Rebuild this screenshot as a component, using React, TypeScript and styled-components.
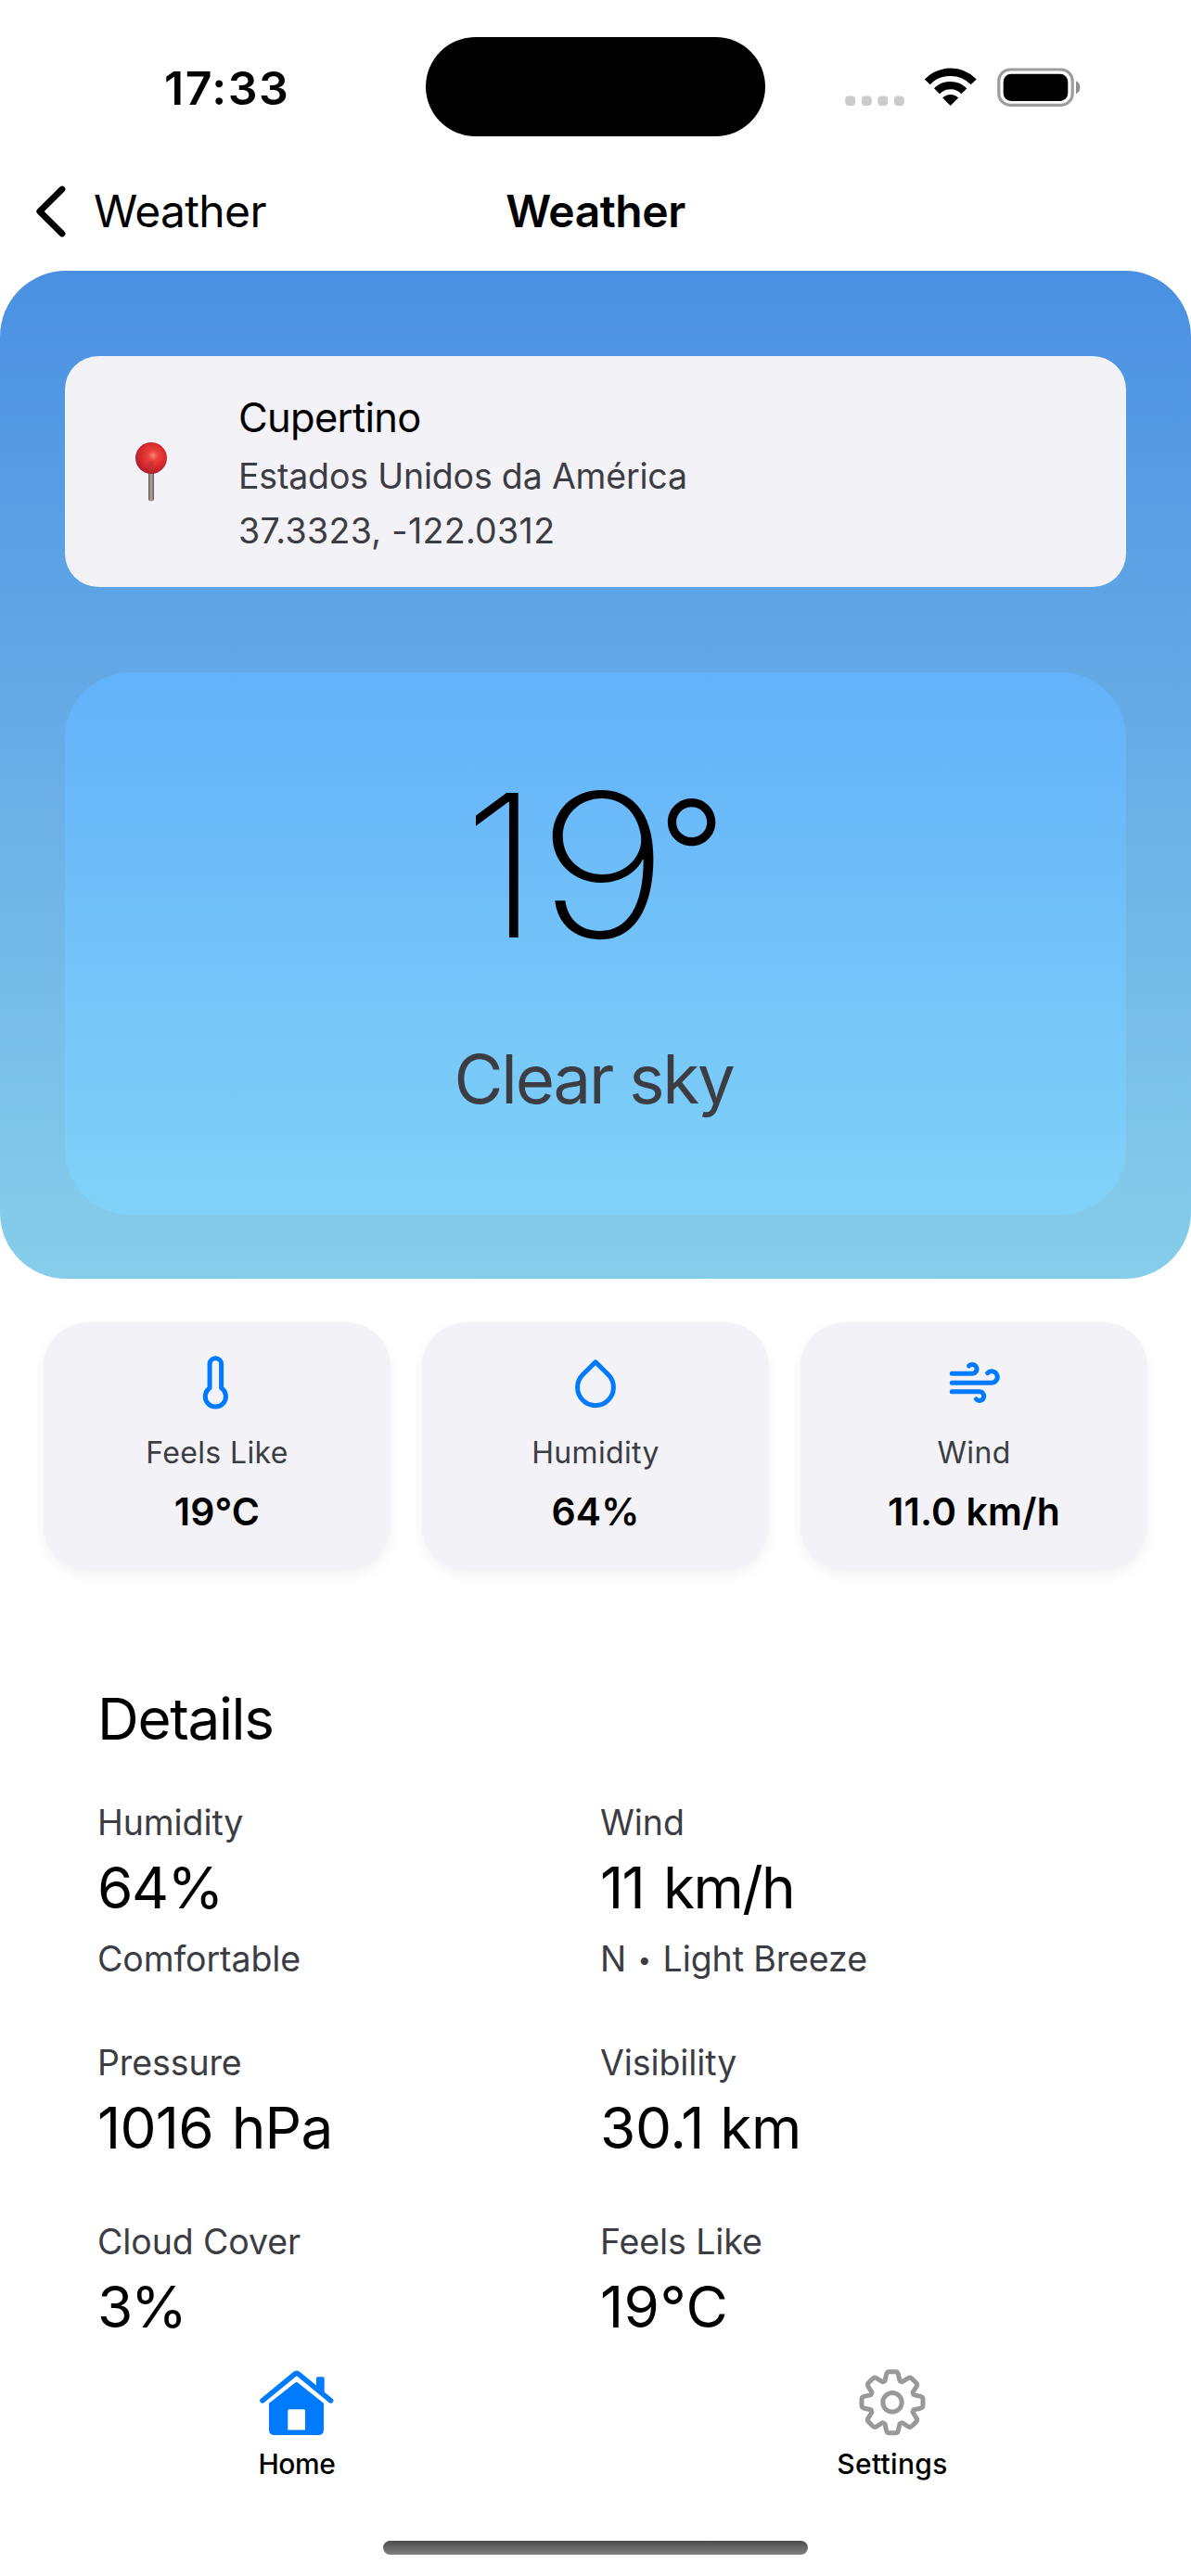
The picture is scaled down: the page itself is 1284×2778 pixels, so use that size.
import React from "react";
import styled, { createGlobalStyle } from "styled-components";

const ink = "#000000";
const secondary = "#3c3c43";
const surface = "#f2f2f7";
const accent = "#007aff";

const GlobalStyle = createGlobalStyle`
  *, *::before, *::after { box-sizing: border-box; }
  html, body { margin: 0; padding: 0; background: #ffffff; }
  body { font-family: Inter, "Liberation Sans", sans-serif; color: ${ink}; }
  svg { display: block; flex: none; }
`;

const Screen = styled.div`
  display: flex;
  flex-direction: column;
  width: 1284px;
  height: 2778px;
  overflow: hidden;
  background: #ffffff;
`;

/* ---------- status bar ---------- */

const StatusBar = styled.header`
  display: grid;
  grid-template-columns: 459px 366px 1fr;
  align-items: center;
  height: 187px;
`;

const Clock = styled.time`
  padding: 3px 0 0 177px;
  font-size: 50px;
  font-weight: 600;
  line-height: 60px;
  letter-spacing: 1.5px;
`;

const Island = styled.div`
  height: 107px;
  border-radius: 54px;
  background: #000000;
`;

const Indicators = styled.div`
  display: flex;
  gap: 22px;
  padding-left: 86px;
`;

/* ---------- navigation ---------- */

const NavBar = styled.nav`
  display: grid;
  grid-template-columns: 1fr auto 1fr;
  align-items: center;
  height: 104.6px;
  padding: 0 38px 23px;
`;

const BackButton = styled.a`
  display: flex;
  align-items: center;
  gap: 30px;
  font-size: 48px;
  line-height: 60px;
  letter-spacing: -0.65px;
`;

const NavTitle = styled.h1`
  margin: 0;
  font-size: 48px;
  font-weight: 600;
  line-height: 60px;
  letter-spacing: -0.45px;
`;

/* ---------- hero ---------- */

const Hero = styled.section`
  display: flex;
  flex-direction: column;
  gap: 91.8px;
  padding: 92.7px 70px 68.5px;
  border-radius: 71px;
  background: linear-gradient(180deg, #4a90e2 0%, #87ceeb 100%);
`;

const LocationCard = styled.div`
  display: grid;
  grid-template-columns: 187px 1fr;
  align-items: center;
  height: 249px;
  border-radius: 36px;
  background: ${surface};
`;

const PinSlot = styled.div`
  display: flex;
  justify-content: center;
  padding-right: 2px;
`;

const LocationText = styled.div`
  display: flex;
  flex-direction: column;
  padding-top: 5px;
`;

const City = styled.div`
  margin-bottom: 4px;
  font-size: 43.5px;
  line-height: 60px;
  letter-spacing: -0.73px;
`;

const LocationLine = styled.div<{ $tracking: number }>`
  font-size: 37.5px;
  line-height: 59.5px;
  letter-spacing: ${(p) => p.$tracking}px;
  color: ${secondary};
`;

const CurrentCard = styled.div`
  height: 585.2px;
  padding-top: 78.4px;
  border-radius: 71px;
  background: linear-gradient(180deg, #63b1f9 0%, #81d2f8 100%);
  text-align: center;
`;

const Temperature = styled.div`
  height: 260px;
  padding-right: 2px;
  font-size: 215px;
  font-weight: 200;
  line-height: 260px;
  white-space: nowrap;
`;

const WideDigit = styled.span`
  display: inline-block;
  transform: scaleX(1.13);
  transform-origin: 13px 50%;
`;

const Degree = styled.span`
  margin-left: 2px;
  font-size: 162px;
  font-weight: 260;
  line-height: 0;
  vertical-align: 31px;
`;

const Condition = styled.div`
  margin-top: 55.8px;
  padding-right: 4px;
  font-size: 72.5px;
  line-height: 90px;
  letter-spacing: -2.2px;
  color: ${secondary};
`;

/* ---------- quick stats ---------- */

const StatRow = styled.section`
  display: grid;
  grid-template-columns: repeat(3, 1fr);
  gap: 34px;
  margin-top: 47px;
  padding: 0 47px;
`;

const StatCard = styled.div`
  display: flex;
  flex-direction: column;
  align-items: center;
  height: 268.7px;
  padding-top: 29.5px;
  border-radius: 48px;
  background: ${surface};
  box-shadow: 0 5px 14px rgba(0, 0, 0, 0.05);
`;

const StatLabel = styled.div`
  margin-top: 15.9px;
  font-size: 32px;
  line-height: 48px;
  letter-spacing: 0.35px;
  color: ${secondary};
`;

const StatValue = styled.div`
  margin-top: 11.2px;
  font-size: 41px;
  font-weight: 600;
  line-height: 56px;
  letter-spacing: 0.1px;
`;

/* ---------- details ---------- */

const Details = styled.section`
  margin-top: 120px;
  padding: 0 95px 0 105px;
`;

const DetailsTitle = styled.h2`
  margin: 0 0 41.6px;
  font-size: 62px;
  font-weight: 400;
  line-height: 80px;
  letter-spacing: -1.35px;
`;

const MetricGrid = styled.div`
  display: grid;
  grid-template-columns: repeat(2, 542px);
  row-gap: 53.3px;
`;

const Metric = styled.div`
  display: flex;
  flex-direction: column;
`;

const MetricLabel = styled.div`
  font-size: 37.5px;
  line-height: 60px;
  letter-spacing: -0.1px;
  color: ${secondary};
`;

const MetricValue = styled.div<{ $tracking: number; $wordGap?: number }>`
  font-size: 62px;
  line-height: 80px;
  letter-spacing: ${(p) => p.$tracking}px;
  word-spacing: ${(p) => p.$wordGap ?? 0}px;
`;

const MetricNote = styled(MetricLabel)`
  padding-top: 8px;
  line-height: 57.4px;
`;

const Bullet = styled.span`
  margin: 0 2px;
  font-size: 26px;
  line-height: 0;
  vertical-align: 3px;
`;

/* ---------- tab bar ---------- */

const TabBar = styled.nav`
  display: grid;
  grid-template-columns: 640px 644px;
  padding-top: 26.6px;
`;

const Tab = styled.a`
  display: flex;
  flex-direction: column;
  align-items: center;
  gap: 10.8px;
`;

const TabLabel = styled.span<{ $tracking: number }>`
  font-size: 30px;
  font-weight: 500;
  line-height: 40px;
  letter-spacing: ${(p) => p.$tracking}px;
`;

const HomeIndicator = styled.div`
  width: 457.5px;
  height: 15px;
  margin: 62.4px 0 0 413.2px;
  border-radius: 8px;
  background: linear-gradient(180deg, #4b4b4b 0%, #808080 100%);
`;

/* ---------- icons ---------- */

const SignalDots = () => (
  <svg width="64" height="42" viewBox="0 0 64 42" fill="#cbcbcb">
    {[0, 17.6, 35.1, 52.7].map((x) => (
      <rect key={x} x={x + 0.3} y="30.5" width="10.8" height="10.4" rx="3.6" />
    ))}
  </svg>
);

const WifiIcon = () => (
  <svg width="56" height="42" viewBox="0 0 56 42" fill="none" stroke="#000">
    <path d="M2.7 15.4A34.7 34.7 0 0 1 52.7 15.4" strokeWidth="8.3" />
    <path d="M13 25.3A20.5 20.5 0 0 1 42.4 25.3" strokeWidth="8.4" />
    <path d="M27.7 41L19.2 32.6A12 12 0 0 1 36.2 32.6Z" fill="#000" stroke="none" />
  </svg>
);

const BatteryIcon = () => (
  <svg width="91" height="42" viewBox="0 0 91 42">
    <rect x="1.8" y="2" width="79.4" height="38.4" rx="12.5" fill="none" stroke="#9c9c9c" strokeWidth="3.2" />
    <rect x="6.7" y="6.7" width="69.6" height="29.2" rx="8.5" fill="#000" />
    <path d="M85 14.3A7.8 7.8 0 0 1 85 28.3Z" fill="#8e8e8e" />
  </svg>
);

const ChevronIcon = () => (
  <svg width="33" height="56" viewBox="0 0 33 56" fill="none" stroke="#000" strokeWidth="6.8" strokeLinecap="round" strokeLinejoin="round">
    <path d="M29 4L4.8 28L29 52" />
  </svg>
);

const PushpinIcon = () => (
  <svg width="36" height="66" viewBox="0 0 36 66">
    <defs>
      <radialGradient id="pinHead" cx="0.56" cy="0.42" r="0.6">
        <stop offset="0" stopColor="#ff8578" />
        <stop offset="0.25" stopColor="#ec443c" />
        <stop offset="0.65" stopColor="#d8292c" />
        <stop offset="1" stopColor="#a91d2c" />
      </radialGradient>
      <linearGradient id="pinStem" x1="0" x2="1" y1="0" y2="0">
        <stop offset="0" stopColor="#5d5250" />
        <stop offset="0.5" stopColor="#b9aaa2" />
        <stop offset="1" stopColor="#5d5250" />
      </linearGradient>
    </defs>
    <rect x="15" y="30" width="6" height="34.5" rx="2.4" fill="url(#pinStem)" />
    <circle cx="18" cy="18" r="17" fill="url(#pinHead)" />
    <rect x="15.6" y="21" width="4.8" height="13" rx="2" fill="#b3343a" opacity="0.5" />
  </svg>
);

const ThermometerIcon = () => (
  <svg width="72" height="72" viewBox="0 0 72 72" fill="none" stroke={accent} strokeWidth="5" strokeLinejoin="round">
    <path d="M28.1 41.8V16a6.25 6.25 0 0 1 12.5 0v25.8a11.1 11.1 0 1 1 -12.5 0Z" />
  </svg>
);

const DropIcon = () => (
  <svg width="72" height="72" viewBox="0 0 72 72" fill="none" stroke={accent} strokeWidth="5" strokeLinejoin="round">
    <path d="M36 13.8L22.2 27.6A19.4 19.4 0 1 0 49.8 27.6Z" />
  </svg>
);

const WindIcon = () => (
  <svg width="72" height="72" viewBox="0 0 72 72" fill="none" stroke={accent} strokeWidth="5" strokeLinecap="round" strokeLinejoin="round">
    <path d="M12.3 26.3H33.7A4.9 4.9 0 1 0 30.6 18" />
    <path d="M12.3 36.2H55A6.2 6.2 0 1 0 50.6 25.7" />
    <path d="M12.3 45.8H41.8A4.8 4.8 0 1 1 38.4 53.9" />
  </svg>
);

const HomeIcon = () => (
  <svg width="80" height="72" viewBox="0 0 80 72" fill={accent}>
    <path d="M3 33.8L37.6 5.4Q39.8 3.6 42 5.4L76.6 33.8" fill="none" stroke={accent} strokeWidth="5.6" strokeLinecap="round" />
    <path d="M61 21V10Q61 8.3 62.7 8.3H68Q69.7 8.3 69.7 10V28Z" />
    <path
      fillRule="evenodd"
      d="M10 36.8L38.3 14.6Q39.7 13.5 41.1 14.6L69 36.8V65Q69 71 63 71H16Q10 71 10 65ZM31.8 43.3Q30.3 43.3 30.3 44.8V65.6H49V44.8Q49 43.3 47.5 43.3Z"
    />
  </svg>
);

const toothAngles = [0, 45, 90, 135, 180, 225, 270, 315];

const rotate = (x: number, y: number, deg: number) => {
  const a = (deg * Math.PI) / 180;
  const rx = x * Math.cos(a) - y * Math.sin(a) + 36;
  const ry = x * Math.sin(a) + y * Math.cos(a) + 35.7;
  return `${rx.toFixed(2)} ${ry.toFixed(2)}`;
};

const gearPath =
  toothAngles
    .map((deg, i) => {
      const p = (x: number, y: number) => rotate(x, y, deg);
      return `${i === 0 ? "M" : "L"}${p(-8.1, -23)}L${p(-6.3, -30.6)}Q${p(-5.7, -33)} ${p(-3.4, -33)}L${p(3.4, -33)}Q${p(5.7, -33)} ${p(6.3, -30.6)}L${p(8.1, -23)}`;
    })
    .join("") + "Z";

const GearIcon = () => (
  <svg width="72" height="72" viewBox="0 0 72 72" fill="none" stroke="#999999" strokeWidth="5" strokeLinejoin="round">
    <path d={gearPath} />
    <circle cx="36" cy="35.7" r="10.2" />
  </svg>
);

/* ---------- data ---------- */

const stats = [
  { label: "Feels Like", value: "19°C", Icon: ThermometerIcon },
  { label: "Humidity", value: "64%", Icon: DropIcon },
  { label: "Wind", value: "11.0 km/h", Icon: WindIcon },
];

type MetricData = {
  label: string;
  value: string;
  tracking: number;
  wordGap?: number;
  note?: React.ReactNode;
};

const metrics: MetricData[] = [
  { label: "Humidity", value: "64%", tracking: -1.5, note: "Comfortable" },
  {
    label: "Wind",
    value: "11 km/h",
    tracking: -1.6,
    wordGap: 5,
    note: (
      <>
        N <Bullet>•</Bullet> Light Breeze
      </>
    ),
  },
  { label: "Pressure", value: "1016 hPa", tracking: -0.75, wordGap: 3 },
  { label: "Visibility", value: "30.1 km", tracking: -0.34 },
  { label: "Cloud Cover", value: "3%", tracking: -2.2 },
  { label: "Feels Like", value: "19°C", tracking: 0.4 },
];

export default function App() {
  return (
    <Screen>
      <GlobalStyle />
      <StatusBar>
        <Clock>17:33</Clock>
        <Island />
        <Indicators>
          <SignalDots />
          <WifiIcon />
          <BatteryIcon />
        </Indicators>
      </StatusBar>

      <NavBar>
        <BackButton>
          <ChevronIcon />
          Weather
        </BackButton>
        <NavTitle>Weather</NavTitle>
      </NavBar>

      <Hero>
        <LocationCard>
          <PinSlot>
            <PushpinIcon />
          </PinSlot>
          <LocationText>
            <City>Cupertino</City>
            <LocationLine $tracking={-0.18}>Estados Unidos da América</LocationLine>
            <LocationLine $tracking={0.33}>37.3323, -122.0312</LocationLine>
          </LocationText>
        </LocationCard>
        <CurrentCard>
          <Temperature>
            1<WideDigit>9</WideDigit>
            <Degree>°</Degree>
          </Temperature>
          <Condition>Clear sky</Condition>
        </CurrentCard>
      </Hero>

      <StatRow>
        {stats.map(({ label, value, Icon }) => (
          <StatCard key={label}>
            <Icon />
            <StatLabel>{label}</StatLabel>
            <StatValue>{value}</StatValue>
          </StatCard>
        ))}
      </StatRow>

      <Details>
        <DetailsTitle>Details</DetailsTitle>
        <MetricGrid>
          {metrics.map((m) => (
            <Metric key={m.label}>
              <MetricLabel>{m.label}</MetricLabel>
              <MetricValue $tracking={m.tracking} $wordGap={m.wordGap}>
                {m.value}
              </MetricValue>
              {m.note && <MetricNote>{m.note}</MetricNote>}
            </Metric>
          ))}
        </MetricGrid>
      </Details>

      <TabBar>
        <Tab>
          <HomeIcon />
          <TabLabel $tracking={-0.4}>Home</TabLabel>
        </Tab>
        <Tab>
          <GearIcon />
          <TabLabel $tracking={0.32}>Settings</TabLabel>
        </Tab>
      </TabBar>
      <HomeIndicator />
    </Screen>
  );
}
